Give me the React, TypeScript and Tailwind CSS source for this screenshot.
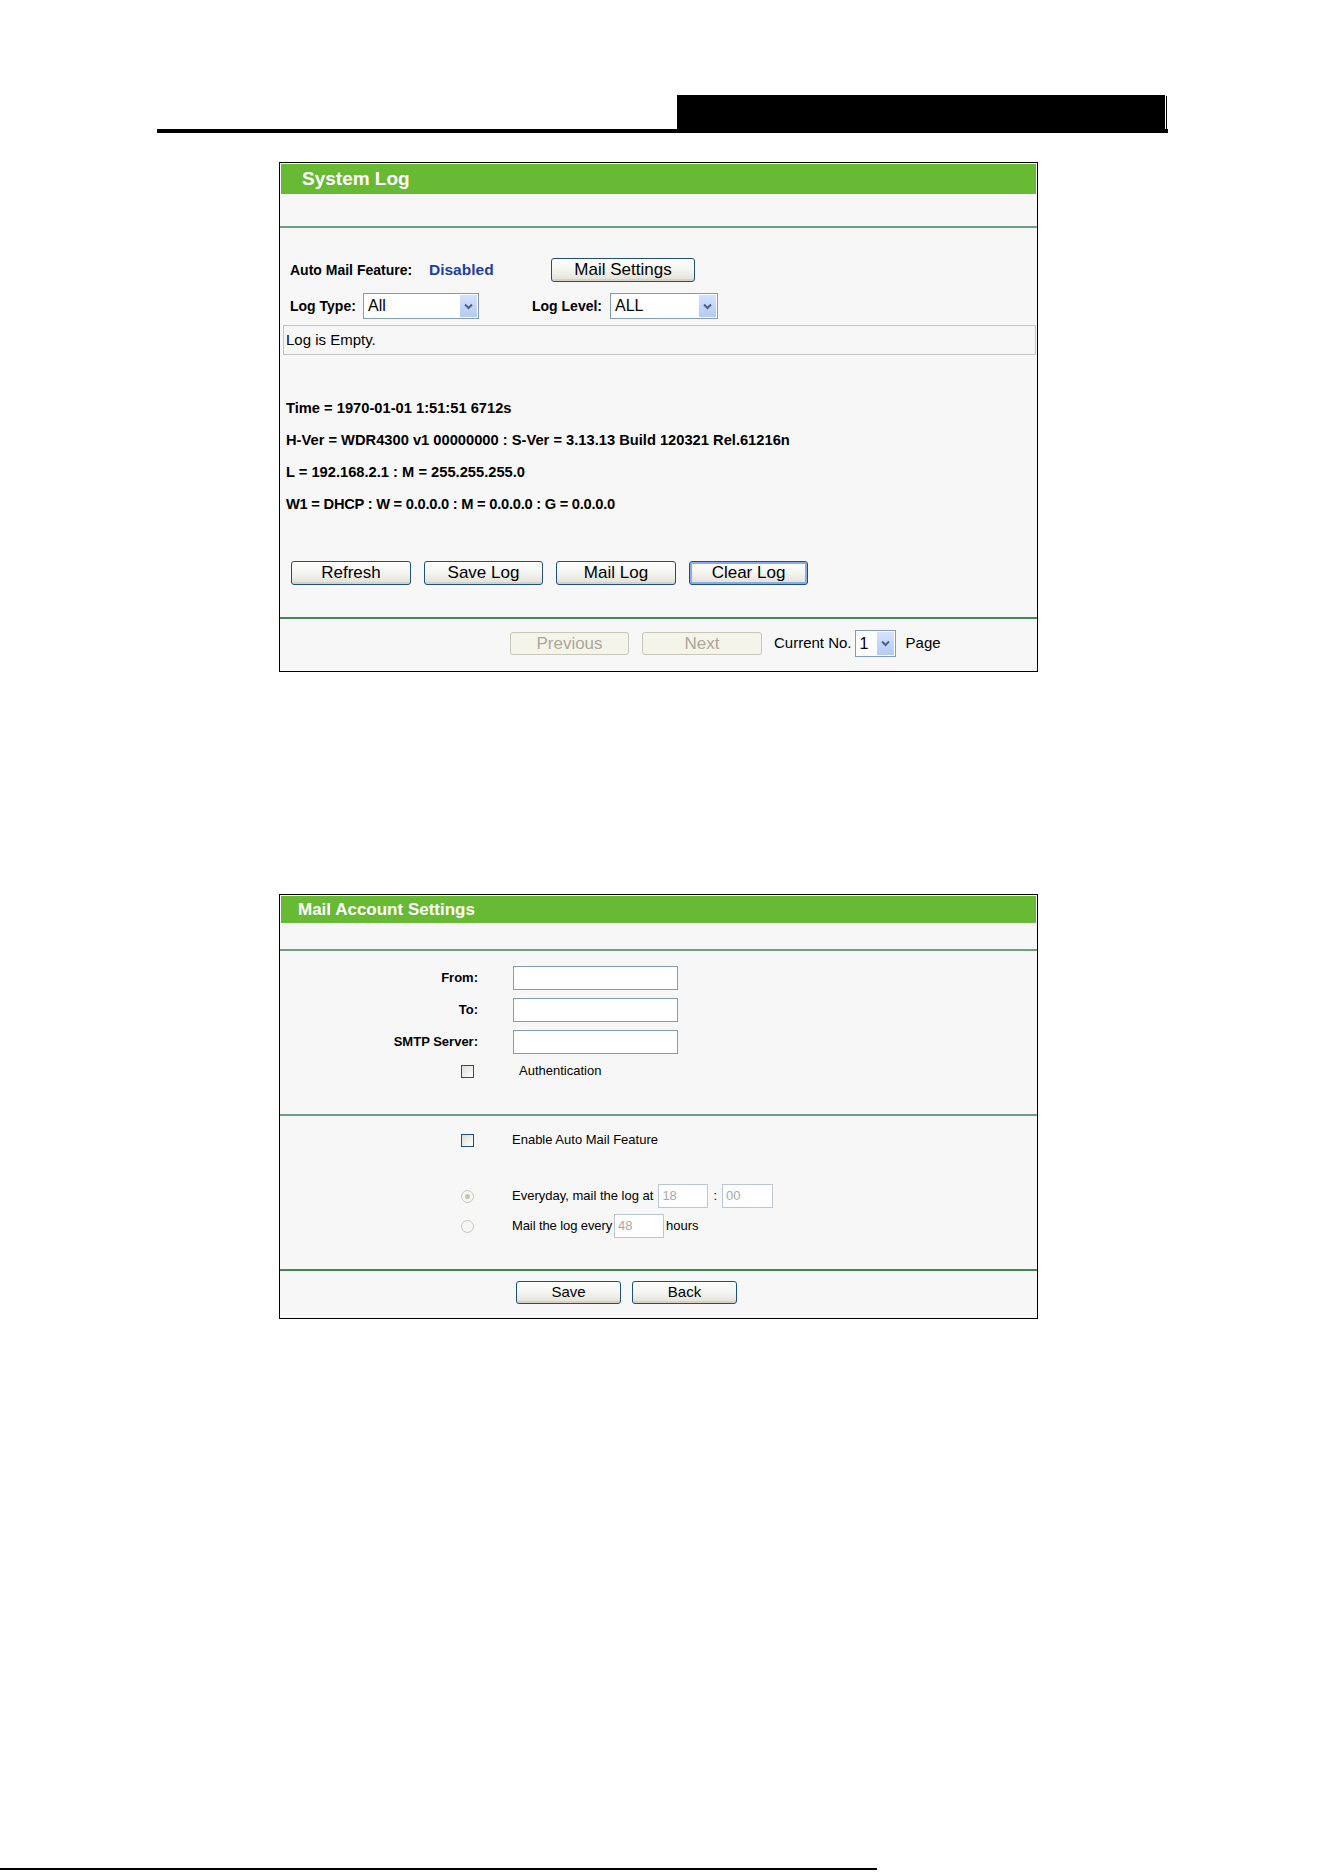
import React from "react";

type BtnProps = {
  label: string;
  className: string;
  disabled?: boolean;
  focused?: boolean;
};

function XpButton({ label, className, disabled, focused }: BtnProps) {
  if (disabled) {
    return (
      <div
        className={`flex items-center justify-center rounded-[3px] border border-[#c9c7ba] bg-[#f5f4ea] text-[#aca899] ${className}`}
      >
        {label}
      </div>
    );
  }
  return (
    <div
      className={`flex items-center justify-center rounded-[3px] border border-[#1f4f7c] bg-linear-to-b from-white via-[#f4f4f0] to-[#e2e0d6] text-black ${
        focused ? "shadow-[inset_0_0_0_2px_#8aaaf0]" : "shadow-[inset_0_-2px_0_#d6d3c6]"
      } ${className}`}
    >
      {label}
    </div>
  );
}

function Chevron() {
  return (
    <svg width="9" height="7" viewBox="0 0 9 7">
      <path d="M1 1.5 L4.5 5 L8 1.5" stroke="#4d6185" strokeWidth="2" fill="none" />
    </svg>
  );
}

function SelectBox({ value, className, textClass }: { value: string; className: string; textClass: string }) {
  return (
    <div className={`flex border border-[#7f9db9] bg-white ${className}`}>
      <div className={`flex flex-1 items-center pl-[4px] text-black ${textClass}`}>{value}</div>
      <div className="m-px flex w-[17px] items-center justify-center bg-linear-to-b from-[#d6e2fe] to-[#b4c9f6]">
        <Chevron />
      </div>
    </div>
  );
}

function CheckBox() {
  return <div className="h-[13px] w-[13px] border border-[#1c5180] bg-linear-to-br from-[#dcdcd7] to-white" />;
}

function Radio({ checked }: { checked?: boolean }) {
  return (
    <div className="flex h-[13px] w-[13px] items-center justify-center rounded-full border border-[#cac8bb] bg-[#f6f6f3]">
      {checked ? <div className="h-[5px] w-[5px] rounded-full bg-[#c4c2b6]" /> : null}
    </div>
  );
}

function TextField({ className, value }: { className: string; value?: string }) {
  return (
    <div className={`flex items-center border bg-white pl-[3px] ${className}`}>
      {value ? <span className="text-[13px] text-[#a8a8a8]">{value}</span> : null}
    </div>
  );
}

const logLines = [
  { text: "Time = 1970-01-01 1:51:51 6712s", cls: "" },
  { text: "H-Ver = WDR4300 v1 00000000 : S-Ver = 3.13.13 Build 120321 Rel.61216n", cls: "" },
  { text: "L = 192.168.2.1 : M = 255.255.255.0", cls: "" },
  { text: "W1 = DHCP : W = 0.0.0.0 : M = 0.0.0.0 : G = 0.0.0.0", cls: "tracking-[-0.25px]" },
];

function SystemLogPanel() {
  return (
    <div className="ml-[279px] mt-[29px] h-[510px] w-[759px] border border-black bg-[#f7f7f7]">
      <div className="mx-px mt-px flex h-[30px] items-center bg-[#68b934] pl-[21px] text-[19px] font-bold text-white">
        System Log
      </div>
      <div className="h-[32px]" />
      <div className="h-[2px] bg-[#6a9f84]" />

      <div className="mt-[30px] flex h-[24px] items-center pl-[10px]">
        <div className="w-[139px] text-[14px] font-bold text-black">Auto Mail Feature:</div>
        <div className="w-[122px] text-[15.5px] font-bold text-[#1e40a0]">Disabled</div>
        <XpButton label="Mail Settings" className="h-[24px] w-[144px] text-[17px]" />
      </div>

      <div className="mt-[11px] flex h-[26px] items-center pl-[10px]">
        <div className="w-[73px] text-[14px] font-bold text-black">Log Type:</div>
        <SelectBox value="All" className="h-[26px] w-[116px]" textClass="text-[16px]" />
        <div className="ml-[53px] w-[78px] text-[14px] font-bold text-black">Log Level:</div>
        <SelectBox value="ALL" className="h-[26px] w-[108px]" textClass="text-[16px]" />
      </div>

      <div className="ml-[3px] mr-px mt-[6px] flex h-[30px] items-center border border-[#c4c4c4] pl-[2px] text-[15px] text-black">
        Log is Empty.
      </div>

      <div className="mt-[37px] flex flex-col pl-[6px]">
        {logLines.map((l) => (
          <div key={l.text} className={`flex h-[32px] items-center text-[14.7px] font-bold text-black ${l.cls}`}>
            {l.text}
          </div>
        ))}
      </div>

      <div className="mt-[41px] flex h-[24px] gap-[13px] pl-[11px] text-[17px]">
        <XpButton label="Refresh" className="w-[120px]" />
        <XpButton label="Save Log" className="w-[119px]" />
        <XpButton label="Mail Log" className="w-[120px]" />
        <XpButton label="Clear Log" className="w-[119px]" focused />
      </div>

      <div className="mt-[32px] h-[2px] bg-[#3d8b50]" />

      <div className="mt-[11px] flex h-[27px] items-center pl-[230px]">
        <XpButton label="Previous" className="h-[23px] w-[119px] text-[17px]" disabled />
        <XpButton label="Next" className="ml-[13px] h-[23px] w-[120px] text-[17px]" disabled />
        <div className="ml-[12px] text-[15px] text-black">Current No.</div>
        <SelectBox value="1" className="ml-[3px] h-[27px] w-[41px]" textClass="text-[16px]" />
        <div className="ml-[10px] text-[15px] text-black">Page</div>
      </div>
    </div>
  );
}

function MailSettingsPanel() {
  const fields = ["From:", "To:", "SMTP Server:"];
  return (
    <div className="ml-[279px] mt-[222px] h-[425px] w-[759px] border border-black bg-[#f7f7f7]">
      <div className="mx-px mt-px flex h-[27px] items-center bg-[#68b934] pl-[17px] text-[17px] font-bold text-white">
        Mail Account Settings
      </div>
      <div className="h-[26px]" />
      <div className="h-[2px] bg-[#6a9f84]" />

      <div className="mt-[15px] flex flex-col gap-[8px]">
        {fields.map((f) => (
          <div key={f} className="flex h-[24px] items-center">
            <div className="w-[198px] text-right text-[13px] font-bold text-black">{f}</div>
            <TextField className="ml-[35px] h-[24px] w-[165px] border-[#7f9db9]" />
          </div>
        ))}
      </div>

      <div className="mt-[5px] flex h-[24px] items-center">
        <div className="flex w-[198px] justify-end pr-[4px]">
          <CheckBox />
        </div>
        <div className="ml-[41px] text-[13px] text-black">Authentication</div>
      </div>

      <div className="mt-[31px] h-[2px] bg-[#6a9f84]" />

      <div className="mt-[12px] flex h-[24px] items-center">
        <div className="flex w-[198px] justify-end pr-[4px]">
          <CheckBox />
        </div>
        <div className="ml-[34px] text-[13px] text-black">Enable Auto Mail Feature</div>
      </div>

      <div className="mt-[32px] flex h-[24px] items-center">
        <div className="flex w-[198px] justify-end pr-[4px]">
          <Radio checked />
        </div>
        <div className="ml-[34px] text-[13px] text-black">Everyday, mail the log at</div>
        <TextField value="18" className="ml-[5px] h-[24px] w-[50px] border-[#b9c6d3]" />
        <div className="ml-[5px] text-[13px] text-black">:</div>
        <TextField value="00" className="ml-[5px] h-[24px] w-[51px] border-[#b9c6d3]" />
      </div>

      <div className="mt-[6px] flex h-[24px] items-center">
        <div className="flex w-[198px] justify-end pr-[4px]">
          <Radio />
        </div>
        <div className="ml-[34px] text-[13px] tracking-[-0.1px] text-black">Mail the log every</div>
        <TextField value="48" className="ml-[2px] h-[24px] w-[50px] border-[#b9c6d3]" />
        <div className="ml-[2px] text-[13px] text-black">hours</div>
      </div>

      <div className="mt-[31px] h-[2px] bg-[#3d8b50]" />

      <div className="mt-[10px] flex h-[23px] gap-[11px] pl-[236px] text-[15px]">
        <XpButton label="Save" className="w-[105px]" />
        <XpButton label="Back" className="w-[105px]" />
      </div>
    </div>
  );
}

export default function App() {
  return (
    <div className="relative h-[1872px] w-[1324px] overflow-hidden bg-white font-['Liberation_Sans',Arial,sans-serif]">
      {/* page header rule with the dark title block */}
      <div className="pl-[157px] pt-[95px]">
        <div className="w-[1011px]">
          <div className="flex h-[34px]">
            <div className="w-[520px]" />
            <div className="w-[488px] bg-black" />
            <div className="w-px" />
            <div className="mt-px w-px bg-black" />
          </div>
          <div className="h-[4px] bg-black" />
        </div>
      </div>

      <SystemLogPanel />
      <MailSettingsPanel />

      {/* footer rule */}
      <div className="mt-[549px] h-[2px] w-[877px] bg-black" />
    </div>
  );
}
